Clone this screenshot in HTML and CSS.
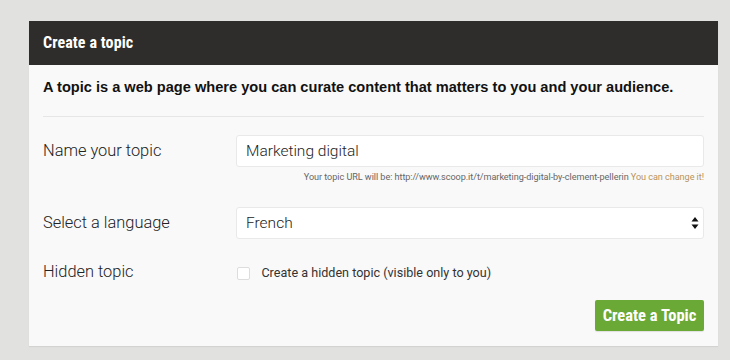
FILE: index.html
```html
<!DOCTYPE html>
<html>
<head>
<meta charset="utf-8">
<link rel="stylesheet" href="styles.css">
</head>
<body>
<div class="card">
  <div class="card-head">Create a topic</div>
  <div class="card-body">
    <p class="intro">A topic is a web page where you can curate content that matters to you and your audience.</p>
    <div class="sep"></div>
    <div class="row">
      <div class="label">Name your topic</div>
      <div class="field">
        <div class="input">Marketing digital</div>
        <div class="hint">Your topic URL will be: http://www.scoop.it/t/marketing-digital-by-clement-pellerin <span class="change">You can change it!</span></div>
      </div>
    </div>
    <div class="row row-lang">
      <div class="label">Select a language</div>
      <div class="field">
        <div class="input select">French
          <svg class="arrows" width="8" height="14" viewBox="0 0 8 14"><path d="M4 1 L7.5 5.5 H0.5 Z M4 13 L7.5 8.5 H0.5 Z" fill="#111"/></svg>
        </div>
      </div>
    </div>
    <div class="row row-hidden">
      <div class="label">Hidden topic</div>
      <div class="field check-field">
        <span class="checkbox"></span>
        <span class="check-text">Create a hidden topic (visible only to you)</span>
      </div>
    </div>
    <div class="actions">
      <button class="btn">Create a Topic</button>
    </div>
  </div>
</div>
</body>
</html>
```
FILE: styles.css
```css
html, body {
  margin: 0;
  padding: 0;
  background: #e1e1df;
  width: 730px;
  height: 360px;
  overflow: hidden;
  font-family: Roboto, "Liberation Sans", sans-serif;
}
.card {
  margin: 21px 0 0 29px;
  width: 689px;
  background: #f9f9f9;
  box-shadow: 0 1px 1px rgba(0,0,0,0.06);
}
.card-head {
  height: 44px;
  background: #2f2d2b;
  color: #fff;
  font-family: "Liberation Sans Narrow", "Roboto Condensed", Roboto, sans-serif;
  font-weight: bold;
  font-size: 16px;
  line-height: 44px;
  padding-left: 14px;
  letter-spacing: 0.1px;
}
.card-body {
  padding: 0 14px 14px 14px;
  height: 267px;
}
.intro {
  margin: 0;
  padding-top: 13px;
  font-family: "Liberation Sans", Arial, sans-serif;
  font-weight: bold;
  font-size: 14.6px;
  line-height: 18px;
  color: #111;
}
.sep {
  margin-top: 20px;
  height: 1px;
  background: #e6e6e6;
  width: 661px;
}
.row {
  display: flex;
  align-items: flex-start;
  margin-top: 18px;
}
.label {
  width: 193px;
  font-size: 16.4px;
  color: #222;
  line-height: 32px;
  font-weight: 300;
}
.field {
  width: 468px;
}
.input {
  height: 30px;
  border: 1px solid #e9e9e9;
  border-radius: 3px;
  background: #fff;
  font-size: 15.5px;
  font-weight: 300;
  color: #222;
  line-height: 30px;
  padding-left: 9px;
  box-sizing: content-box;
  width: 457px;
  position: relative;
}
.select .arrows {
  position: absolute;
  right: 4px;
  top: 8px;
}
.hint {
  text-align: right;
  font-size: 9.1px;
  color: #666;
  margin-top: 4px;
  line-height: 12px;
  letter-spacing: -0.05px;
  white-space: nowrap;
}
.change {
  color: #b8945c;
}
.row-lang {
  margin-top: 24px;
}
.row-hidden {
  margin-top: 23px;
}
.row-hidden .label {
  line-height: 20px;
}
.check-field {
  display: flex;
  align-items: center;
  height: 20px;
  padding-left: 2px;
}
.checkbox {
  width: 11px;
  height: 11px;
  border: 1px solid #ddd;
  border-radius: 2px;
  background: #fff;
  margin-right: 11px;
  margin-top: 3px;
}
.check-text {
  font-size: 12.6px;
  color: #333;
  font-weight: 400;
}
.actions {
  display: flex;
  justify-content: flex-end;
  margin-top: 18px;
  width: 661px;
}
.btn {
  background: #6aa936;
  color: #fff;
  border: 0;
  border-radius: 2px;
  height: 31px;
  width: 109px;
  font-family: "Liberation Sans Narrow", "Roboto Condensed", Roboto, sans-serif;
  font-weight: bold;
  font-size: 16.5px;
  padding: 0;
  box-shadow: 0 1px 1px rgba(0,0,0,0.1);
}
```
